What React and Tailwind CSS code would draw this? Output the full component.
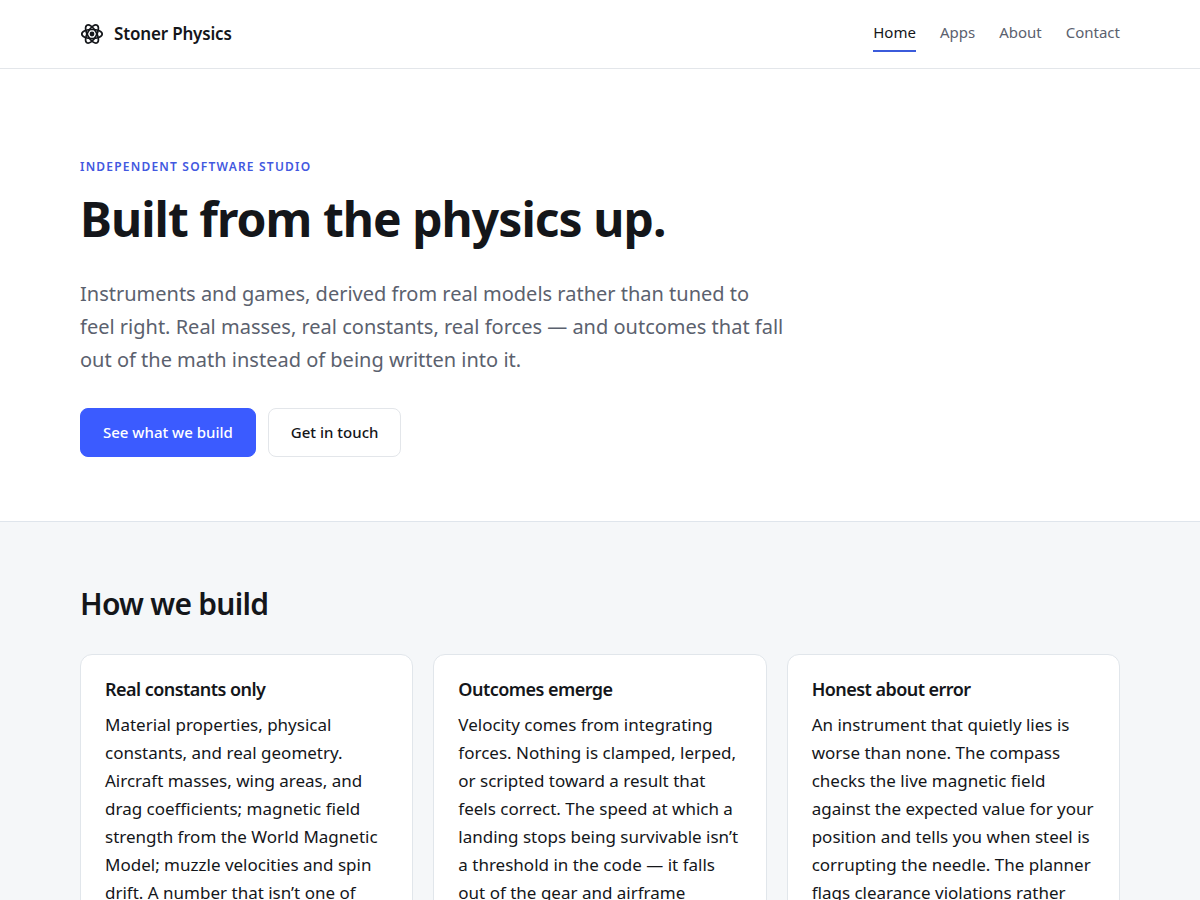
import { clsx } from 'clsx'

const NAV = ['Home', 'Apps', 'About', 'Contact']

const PRINCIPLES = [
  {
    title: 'Real constants only',
    body: 'Material properties, physical constants, and real geometry. Aircraft masses, wing areas, and drag coefficients; magnetic field strength from the World Magnetic Model; muzzle velocities and spin drift. A number that isn’t one of',
  },
  {
    title: 'Outcomes emerge',
    body: 'Velocity comes from integrating forces. Nothing is clamped, lerped, or scripted toward a result that feels correct. The speed at which a landing stops being survivable isn’t a threshold in the code — it falls out of the gear and airframe',
  },
  {
    title: 'Honest about error',
    body: 'An instrument that quietly lies is worse than none. The compass checks the live magnetic field against the expected value for your position and tells you when steel is corrupting the needle. The planner flags clearance violations rather',
  },
]

function AtomMark() {
  return (
    <svg className="size-6" viewBox="0 0 24 24" fill="none" stroke="currentColor" strokeWidth="1.7" aria-hidden="true">
      <ellipse cx="12" cy="12" rx="10.2" ry="4.5" />
      <ellipse cx="12" cy="12" rx="10.2" ry="4.5" transform="rotate(60 12 12)" />
      <ellipse cx="12" cy="12" rx="10.2" ry="4.5" transform="rotate(120 12 12)" />
      <circle cx="12" cy="12" r="2.4" fill="currentColor" stroke="none" />
    </svg>
  )
}

export default function App() {
  return (
    <div className="min-h-screen bg-white font-['Noto_Sans',sans-serif] text-[17px] text-[#14161a]">
      <header className="border-b border-[#e3e6ea]">
        <div className="mx-auto flex h-17 max-w-[1088px] items-center justify-between px-6">
          <a href="#home" className="flex items-center gap-[10px] font-semibold tracking-[-0.01em]">
            <AtomMark />
            Stoner Physics
          </a>
          <nav className="flex gap-6 text-[15px] leading-6">
            {NAV.map((item) => (
              <a
                key={item}
                href={`#${item.toLowerCase()}`}
                className={clsx(
                  'border-b-2 pt-1 pb-1.5',
                  item === 'Home' ? 'border-[#3b5bdb]' : 'border-transparent text-[#5b616e]',
                )}
              >
                {item}
              </a>
            ))}
          </nav>
        </div>
      </header>

      <main>
        <section id="home" className="border-b border-[#dfe5ec]">
          <div className="mx-auto max-w-[1088px] px-6 pt-[88px] pb-16">
            <p className="text-xs leading-5 font-semibold tracking-widest text-[#4258e0] uppercase">
              Independent software studio
            </p>
            <h1 className="mt-3 text-5xl leading-[60px] font-bold tracking-[-0.02em]">Built from the physics up.</h1>
            <p className="mt-7 max-w-176 text-xl leading-[33px] text-[#5b616e]">
              Instruments and games, derived from real models rather than tuned to feel right. Real masses, real
              constants, real forces — and outcomes that fall out of the math instead of being written into it.
            </p>
            <div className="mt-8 flex gap-3 text-[15px] font-medium">
              <button type="button" className="h-[49px] rounded-lg border border-[#3b5bff] bg-[#3b5bff] px-[22px] text-white">
                See what we build
              </button>
              <button type="button" className="h-[49px] rounded-lg border border-[#e3e6ea] px-[22px]">
                Get in touch
              </button>
            </div>
          </div>
        </section>

        <section className="bg-[#f5f7f9]">
          <div className="mx-auto max-w-[1088px] px-6 py-16">
            <h2 className="text-3xl leading-9 font-semibold tracking-tight">How we build</h2>
            <div className="mt-8 grid grid-cols-3 gap-5">
              {PRINCIPLES.map(({ title, body }) => (
                <article key={title} className="rounded-xl border border-[#e1e6eb] bg-white p-6">
                  <h3 className="text-lg leading-5 font-semibold tracking-[-0.03em]">{title}</h3>
                  <p className="mt-3 leading-7">{body}</p>
                </article>
              ))}
            </div>
          </div>
        </section>
      </main>
    </div>
  )
}
